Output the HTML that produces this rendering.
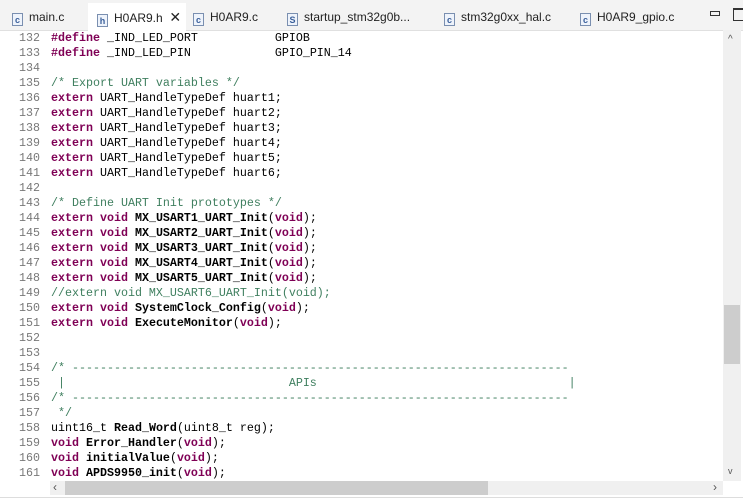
<!DOCTYPE html>
<html><head><style>
body{margin:0;width:743px;height:502px;overflow:hidden;background:#fff;font-family:"Liberation Sans",sans-serif;position:relative}
.tabs{position:absolute;left:0;top:0;width:743px;height:30px;background:#f3f3f3;border-bottom:1px solid #e0e0e0}
.tab{position:absolute;top:8px;font-size:12px;color:#222;height:18px;line-height:18px}
.ic{display:inline-block;width:11px;height:13px;border:1px solid #7a8fb0;background:#eef3fb;font-size:9px;line-height:12px;text-align:center;color:#3a5f9a;margin-right:6px;vertical-align:-2px;box-sizing:border-box;font-weight:bold}
.act{position:absolute;left:88px;top:3px;width:98px;height:28px;background:#fff}
.code{position:absolute;left:0;top:31px;font-family:"Liberation Mono",monospace;font-size:11.67px;line-height:15px;white-space:pre;color:#000}
.ln{display:inline-block;width:40px;text-align:right;color:#787878;margin-right:11px}
.k{color:#7f0055;font-weight:bold}
.c{color:#3f7f5f}
b{font-weight:bold}
.vs{position:absolute;left:723px;top:30px;width:18px;height:451px;background:#f0f0f0}
.hs{position:absolute;left:50px;top:481px;width:673px;height:14px;background:#f0f0f0}
</style></head><body>
<div class="tabs">
<div class="act"></div>
<div class="tab" style="left:12px"><span class="ic">c</span>main.c</div>
<div class="tab" style="left:97px"><span class="ic">h</span>H0AR9.h &nbsp;<span style="font-size:14px">✕</span></div>
<div class="tab" style="left:193px"><span class="ic">c</span>H0AR9.c</div>
<div class="tab" style="left:287px"><span class="ic">S</span>startup_stm32g0b...</div>
<div class="tab" style="left:444px"><span class="ic">c</span>stm32g0xx_hal.c</div>
<div class="tab" style="left:580px"><span class="ic">c</span>H0AR9_gpio.c</div>
<div style="position:absolute;left:710px;top:11px;width:8px;height:3px;border:1px solid #333"></div>
<div style="position:absolute;left:733px;top:8px;width:10px;height:10px;border:1px solid #333;border-top-width:2px"></div>
</div>
<div class="code"><span class="ln">132</span><span class="k">#define</span> _IND_LED_PORT           GPIOB
<span class="ln">133</span><span class="k">#define</span> _IND_LED_PIN            GPIO_PIN_14
<span class="ln">134</span>
<span class="ln">135</span><span class="c">/* Export UART variables */</span>
<span class="ln">136</span><span class="k">extern</span> UART_HandleTypeDef huart1;
<span class="ln">137</span><span class="k">extern</span> UART_HandleTypeDef huart2;
<span class="ln">138</span><span class="k">extern</span> UART_HandleTypeDef huart3;
<span class="ln">139</span><span class="k">extern</span> UART_HandleTypeDef huart4;
<span class="ln">140</span><span class="k">extern</span> UART_HandleTypeDef huart5;
<span class="ln">141</span><span class="k">extern</span> UART_HandleTypeDef huart6;
<span class="ln">142</span>
<span class="ln">143</span><span class="c">/* Define UART Init prototypes */</span>
<span class="ln">144</span><span class="k">extern void</span> <b>MX_USART1_UART_Init</b>(<span class="k">void</span>);
<span class="ln">145</span><span class="k">extern void</span> <b>MX_USART2_UART_Init</b>(<span class="k">void</span>);
<span class="ln">146</span><span class="k">extern void</span> <b>MX_USART3_UART_Init</b>(<span class="k">void</span>);
<span class="ln">147</span><span class="k">extern void</span> <b>MX_USART4_UART_Init</b>(<span class="k">void</span>);
<span class="ln">148</span><span class="k">extern void</span> <b>MX_USART5_UART_Init</b>(<span class="k">void</span>);
<span class="ln">149</span><span class="c">//extern void MX_USART6_UART_Init(void);</span>
<span class="ln">150</span><span class="k">extern void</span> <b>SystemClock_Config</b>(<span class="k">void</span>);
<span class="ln">151</span><span class="k">extern void</span> <b>ExecuteMonitor</b>(<span class="k">void</span>);
<span class="ln">152</span>
<span class="ln">153</span>
<span class="ln">154</span><span class="c">/* -----------------------------------------------------------------------</span>
<span class="ln">155</span><span class="c"> |                                APIs                                    |</span>
<span class="ln">156</span><span class="c">/* -----------------------------------------------------------------------</span>
<span class="ln">157</span><span class="c"> */</span>
<span class="ln">158</span>uint16_t <b>Read_Word</b>(uint8_t reg);
<span class="ln">159</span><span class="k">void</span> <b>Error_Handler</b>(<span class="k">void</span>);
<span class="ln">160</span><span class="k">void</span> <b>initialValue</b>(<span class="k">void</span>);
<span class="ln">161</span><span class="k">void</span> <b>APDS9950_init</b>(<span class="k">void</span>);</div>
<div class="vs"><div style="position:absolute;top:4px;left:5px;font-size:10px;color:#555">^</div><div style="position:absolute;left:1px;top:275px;width:16px;height:59px;background:#cdcdcd"></div><div style="position:absolute;top:436px;left:5px;font-size:9px;color:#555">v</div></div>
<div class="hs"><div style="position:absolute;left:3px;top:-1px;font-size:12px;color:#555">‹</div><div style="position:absolute;left:15px;top:0;width:423px;height:14px;background:#cdcdcd"></div><div style="position:absolute;right:6px;top:-1px;font-size:12px;color:#555">›</div></div>
<div style="position:absolute;left:0;top:497px;width:743px;height:1px;background:#ddd"></div>
</body></html>
